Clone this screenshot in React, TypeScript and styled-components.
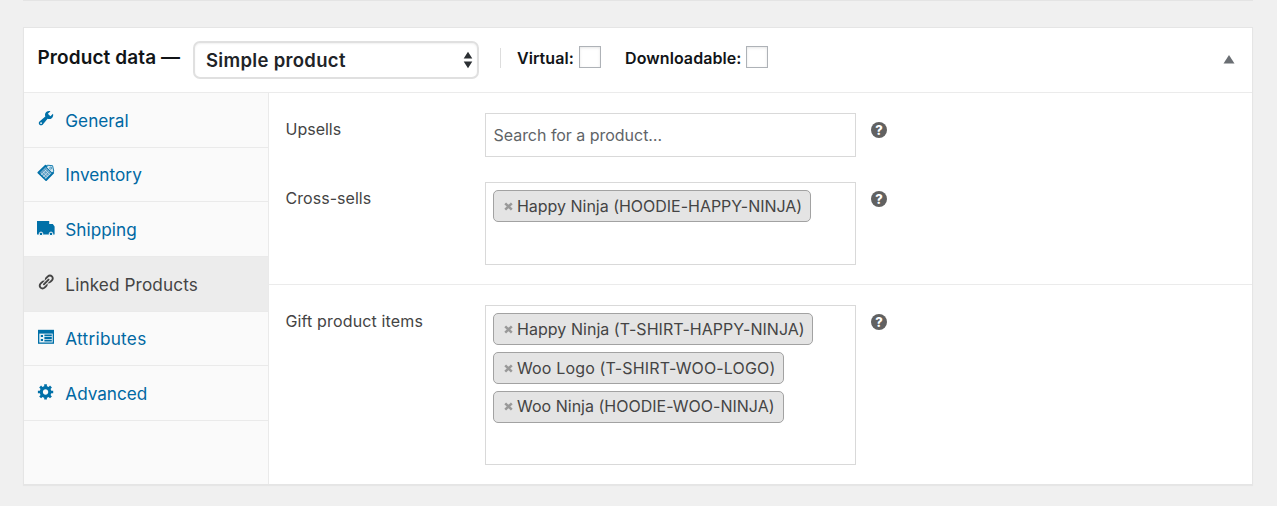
import React from "react";
import styled, { createGlobalStyle } from "styled-components";

const Global = createGlobalStyle`
  *, *::before, *::after { box-sizing: border-box; }
  html, body { margin: 0; padding: 0; background: #f0f0f0; }
  body { font-family: Inter, "Liberation Sans", sans-serif; font-size: 16px; color: #444; overflow: hidden; }
`;

const Page = styled.main`
  width: 1277px;
  height: 506px;
  padding: 0 24px 0 23px;
  display: flex;
  flex-direction: column;
  gap: 26px;
`;

const PreviousPanel = styled.div`
  height: 1px;
  background: #e4e4e4;
  flex: none;
`;

const Panel = styled.section`
  height: 458px;
  background: #fff;
  border: 1px solid #e5e5e5;
  box-shadow: 0 1px 1px rgba(0, 0, 0, 0.04);
  display: flex;
  flex-direction: column;
`;

const Header = styled.header`
  height: 65px;
  flex: none;
  border-bottom: 1px solid #ebebeb;
  display: flex;
  align-items: flex-start;
  padding: 13px 17px 0 13.5px;
  color: #111417;
  font-weight: 600;
`;

const Title = styled.h2`
  margin: 0;
  width: 155.5px;
  font-size: 19px;
  font-weight: 600;
  line-height: 33px;
  letter-spacing: 0.1px;
  white-space: nowrap;
`;

const TypeSelect = styled.div`
  width: 286px;
  height: 38px;
  border: 2px solid #e0e0e0;
  border-radius: 7px;
  box-shadow: inset 0 1px 2px rgba(0, 0, 0, 0.06);
  display: flex;
  align-items: center;
  justify-content: space-between;
  padding: 0 4px 0 11px;
  color: #1f2428;
  font-size: 18.5px;
  letter-spacing: 0.31px;
`;

const Options = styled.div`
  margin: 7px 0 0 21px;
  height: 20px;
  border-left: 1px solid #ddd;
  padding-left: 16px;
  display: flex;
  align-items: center;
`;

const Option = styled.label<{ $width: number; $spacing: number }>`
  width: ${(p) => p.$width}px;
  display: flex;
  align-items: center;
  justify-content: space-between;
  font-size: 16px;
  letter-spacing: ${(p) => p.$spacing}px;
  & + & { margin-left: 24.5px; }
`;

const Checkbox = styled.span`
  width: 22px;
  height: 22px;
  margin-top: -2px;
  border: 1px solid #aeb2b7;
  box-shadow: inset 0 1px 3px rgba(0, 0, 0, 0.1);
  flex: none;
`;

const Collapse = styled.svg`
  margin: 14px 0 0 auto;
`;

const Body = styled.div`
  flex: 1;
  display: flex;
  min-height: 0;
`;

const Tabs = styled.nav`
  width: 245px;
  background: #fafafa;
  border-right: 1px solid #eaeaea;
`;

const Tab = styled.a<{ $active?: boolean }>`
  height: 54.67px;
  display: flex;
  align-items: center;
  border-bottom: 1px solid #eaeaea;
  padding: 2px 0 0 12px;
  background: ${(p) => (p.$active ? "#ececec" : "transparent")};
  color: ${(p) => (p.$active ? "#444" : "#0068a3")};
  svg { margin-right: 9.3px; margin-top: -5px; flex: none; color: ${(p) => (p.$active ? "#444" : "#0070a8")}; }
`;

const TabLabel = styled.span<{ $spacing: number }>`
  font-size: 17.2px;
  line-height: 24px;
  letter-spacing: ${(p) => p.$spacing}px;
  white-space: nowrap;
`;

const Fields = styled.div`
  flex: 1;
`;

const Group = styled.div<{ $height: number; $top: number }>`
  height: ${(p) => p.$height}px;
  padding: ${(p) => p.$top}px 0 0 16.5px;
  display: flex;
  flex-direction: column;
  gap: 25px;
  & + & { border-top: 1px solid #ebebeb; }
`;

const Field = styled.div`
  display: flex;
  align-items: flex-start;
`;

const Label = styled.label<{ $spacing?: number }>`
  width: 199.5px;
  padding-top: 4px;
  line-height: 24px;
  font-size: 16px;
  letter-spacing: ${(p) => p.$spacing ?? 0}px;
`;

const Box = styled.div<{ $height: number }>`
  width: 371px;
  height: ${(p) => p.$height}px;
  border: 1px solid #d9d9d9;
  padding: 7.4px 7px;
  display: flex;
  flex-direction: column;
  align-items: flex-start;
  gap: 6.7px;
`;

const Placeholder = styled.span`
  padding-left: 0.5px;
  line-height: 29px;
  color: #5f6468;
  font-size: 16px;
  letter-spacing: -0.03px;
`;

const Chip = styled.span<{ $width: number; $spacing: number }>`
  width: ${(p) => p.$width}px;
  height: 32px;
  flex: none;
  border: 1px solid #a2a2a2;
  border-radius: 5px;
  background: #e4e4e4;
  display: flex;
  align-items: center;
  gap: 4px;
  padding: 0 0 0.6px 10px;
  font-size: 16px;
  letter-spacing: ${(p) => p.$spacing}px;
  white-space: nowrap;
  svg { flex: none; margin-top: 1px; }
`;

const Help = styled.span`
  width: 16px;
  height: 16px;
  margin: 9px 0 0 15px;
  border-radius: 50%;
  background: #616161;
  color: #fff;
  font-size: 13px;
  font-weight: 800;
  line-height: 16px;
  text-align: center;
`;

const WrenchIcon = () => (
  <svg width="20" height="20" viewBox="0 0 20 20" fill="currentColor">
    <path transform="translate(1 1.1) scale(.9)" d="M16.68 9.77c-1.34 1.34-3.3 1.67-4.95.99l-5.41 6.52c-.99.99-2.59.99-3.58 0s-.99-2.59 0-3.57l6.52-5.42c-.68-1.65-.35-3.61.99-4.95 1.28-1.28 3.12-1.62 4.72-1.06l-2.89 2.89 2.82 2.82 2.86-2.87c.53 1.58.18 3.39-1.08 4.65zM3.81 16.21c.4.39 1.04.39 1.43 0 .4-.4.4-1.04 0-1.43-.39-.4-1.03-.4-1.43 0-.39.39-.39 1.03 0 1.43z" />
  </svg>
);

const InventoryIcon = () => (
  <svg width="20" height="20" viewBox="0 0 20 20">
    <path d="M2.3 9.6 9.6 2.6l7.6 7.2-7.1 7.2z" fill="#5c9fc6" stroke="currentColor" strokeWidth="1.8" strokeLinejoin="round" />
    <path d="m5 10.3 5.2 5M6.8 8.5l5.2 5M8.6 6.7l5.2 5M5.2 12l5.4-5.5M7.2 13.8l5.4-5.5M9.1 15.7l5.4-5.5" stroke="#d5e7f0" strokeWidth=".7" />
    <path d="m11.4 2.2 5.2.5 1.2 5.5-1.8 1.7-5.4-5.4z" fill="#d5e7f0" stroke="currentColor" strokeWidth=".9" />
    <circle cx="14.7" cy="5.1" r="1" fill="#fafafa" stroke="currentColor" strokeWidth=".7" />
  </svg>
);

const TruckIcon = () => (
  <svg width="20" height="20" viewBox="0 0 20 20" fill="currentColor">
    <path d="M1 2.9h12.2v3h3.6l1.8 2.6v8H1z" />
    <g stroke="#fafafa" strokeWidth="1">
      <circle cx="5" cy="15.9" r="1.8" />
      <circle cx="15" cy="15.9" r="1.8" />
    </g>
  </svg>
);

const LinkIcon = () => (
  <svg width="20" height="20" viewBox="0 0 20 20" fill="currentColor">
    <path transform="translate(1 1.2) scale(.88)" d="M17.74 2.76c1.68 1.69 1.68 4.41 0 6.1l-1.53 1.52c-1.12 1.12-2.7 1.47-4.14 1.09l2.62-2.61.76-.77.76-.76c.84-.84.84-2.2 0-3.04-.84-.85-2.2-.85-3.04 0l-.77.76-3.38 3.38c-.37-1.44-.02-3.02 1.1-4.14l1.52-1.53c1.69-1.68 4.42-1.68 6.1 0zM8.59 13.43l5.34-5.34c.42-.42.42-1.1 0-1.52-.44-.43-1.13-.39-1.53 0l-5.33 5.34c-.42.42-.42 1.1 0 1.52.44.43 1.13.39 1.52 0zm-.76 2.29l4.14-4.15c.38 1.44.03 3.02-1.09 4.14l-1.52 1.53c-1.69 1.68-4.41 1.68-6.1 0-1.68-1.68-1.68-4.42 0-6.1l1.53-1.52c1.12-1.12 2.7-1.47 4.14-1.1l-4.14 4.15c-.85.84-.85 2.2 0 3.05.84.84 2.2.84 3.04 0z" />
  </svg>
);

const AttributesIcon = () => (
  <svg width="20" height="20" viewBox="0 0 20 20" fill="none">
    <path d="M2 2.8h16v14H2z" fill="currentColor" />
    <path d="M3.3 6.6h13.4v8.9H3.3z" fill="#e8f1f6" />
    <path d="M4.8 9h2.2M4.8 13h2.2M8.4 8.4h7.4M8.4 11h7.4M8.4 13.6h7.4" stroke="currentColor" strokeWidth="1.8" />
  </svg>
);

const GearIcon = () => (
  <svg width="20" height="20" viewBox="0 0 20 20" fill="currentColor">
    <path transform="translate(1 .5) scale(.9)" d="M18 12h-2.18c-.17.7-.44 1.35-.81 1.93l1.54 1.54-2.1 2.1-1.54-1.54c-.58.36-1.23.63-1.91.79V19H8v-2.18c-.68-.16-1.33-.43-1.91-.79l-1.54 1.54-2.12-2.12 1.54-1.54c-.36-.58-.63-1.23-.79-1.91H1V9.03h2.17c.16-.7.44-1.35.8-1.94L2.43 5.55l2.1-2.1 1.54 1.54c.58-.37 1.24-.64 1.93-.81V2h3v2.18c.68.16 1.33.43 1.91.79l1.54-1.54 2.12 2.12-1.54 1.54c.36.59.64 1.24.8 1.94H18V12zm-8.5 1.5c1.66 0 3-1.34 3-3s-1.34-3-3-3-3 1.34-3 3 1.34 3 3 3z" />
  </svg>
);

const RemoveIcon = () => (
  <svg width="9" height="9" viewBox="0 0 9 9">
    <path d="m1.2 1.3 6.6 6.4m0-6.4L1.2 7.7" stroke="#999" strokeWidth="2.5" />
  </svg>
);

const tabs = [
  { label: "General", Icon: WrenchIcon, spacing: 0 },
  { label: "Inventory", Icon: InventoryIcon, spacing: 0.04 },
  { label: "Shipping", Icon: TruckIcon, spacing: 0.02 },
  { label: "Linked Products", Icon: LinkIcon, spacing: 0.11, active: true },
  { label: "Attributes", Icon: AttributesIcon, spacing: 0.27 },
  { label: "Advanced", Icon: GearIcon, spacing: -0.03 },
];

const crossSells = [{ name: "Happy Ninja (HOODIE-HAPPY-NINJA)", width: 318, spacing: -0.02 }];
const gifts = [
  { name: "Happy Ninja (T-SHIRT-HAPPY-NINJA)", width: 320, spacing: 0.04 },
  { name: "Woo Logo (T-SHIRT-WOO-LOGO)", width: 291, spacing: 0.15 },
  { name: "Woo Ninja (HOODIE-WOO-NINJA)", width: 291, spacing: 0.01 },
];

const Chips = ({ items }: { items: typeof gifts }) => (
  <>
    {items.map((item) => (
      <Chip key={item.name} $width={item.width} $spacing={item.spacing}>
        <RemoveIcon />
        <span>{item.name}</span>
      </Chip>
    ))}
  </>
);

export default function App() {
  return (
    <>
      <Global />
      <Page>
        <PreviousPanel />
        <Panel>
          <Header>
            <Title>Product data —</Title>
            <TypeSelect>
              <span>Simple product</span>
              <svg width="10" height="18" viewBox="0 0 10 18" fill="#2b2f33">
                <path d="M5 .7 9.3 7.5H.7zM5 17.3.7 10.5h8.6z" />
              </svg>
            </TypeSelect>
            <Options>
              <Option $width={83.6} $spacing={0.05}>
                Virtual:
                <Checkbox />
              </Option>
              <Option $width={143} $spacing={0.07}>
                Downloadable:
                <Checkbox />
              </Option>
            </Options>
            <Collapse width="12" height="9" viewBox="0 0 12 9" fill="#6a6e73">
              <path d="M6 0 11.5 8.5H.5z" />
            </Collapse>
          </Header>
          <Body>
            <Tabs>
              {tabs.map(({ label, Icon, spacing, active }) => (
                <Tab key={label} $active={active}>
                  <Icon />
                  <TabLabel $spacing={spacing}>{label}</TabLabel>
                </Tab>
              ))}
            </Tabs>
            <Fields>
              <Group $height={191} $top={20}>
                <Field>
                  <Label>Upsells</Label>
                  <Box $height={44}>
                    <Placeholder>Search for a product…</Placeholder>
                  </Box>
                  <Help>?</Help>
                </Field>
                <Field>
                  <Label $spacing={0.04}>Cross-sells</Label>
                  <Box $height={83}>
                    <Chips items={crossSells} />
                  </Box>
                  <Help>?</Help>
                </Field>
              </Group>
              <Group $height={200} $top={20}>
                <Field>
                  <Label $spacing={0.14}>Gift product items</Label>
                  <Box $height={160}>
                    <Chips items={gifts} />
                  </Box>
                  <Help>?</Help>
                </Field>
              </Group>
            </Fields>
          </Body>
        </Panel>
      </Page>
    </>
  );
}
